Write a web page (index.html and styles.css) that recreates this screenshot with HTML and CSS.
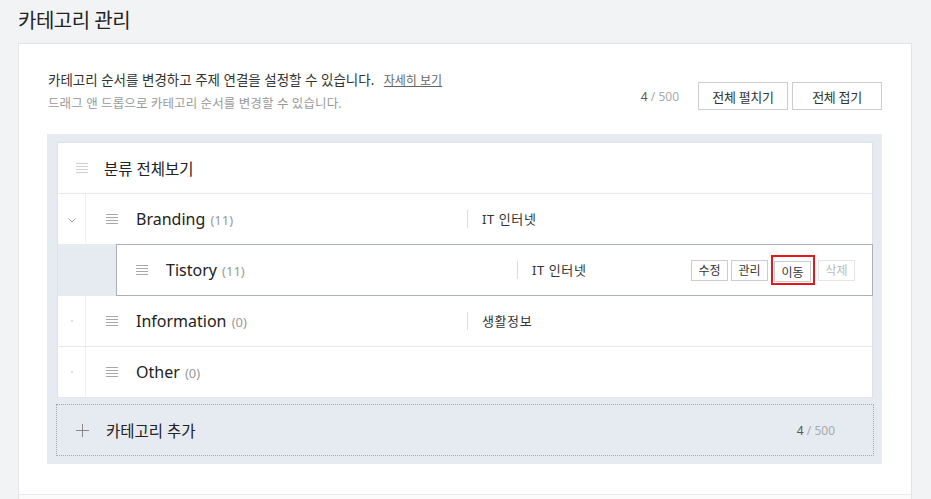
FILE: index.html
```html
<!DOCTYPE html>
<html lang="ko">
<head>
<meta charset="utf-8">
<title>카테고리 관리</title>
<link rel="stylesheet" href="styles.css">
</head>
<body>
<div class="page">
  <h1 class="title">카테고리 관리</h1>
  <div class="card">
    <div class="card-body">
      <div class="head">
        <div class="desc">
          <p class="desc-main">카테고리 순서를 변경하고 주제 연결을 설정할 수 있습니다. <a class="more">자세히 보기</a></p>
          <p class="desc-sub">드래그 앤 드롭으로 카테고리 순서를 변경할 수 있습니다.</p>
        </div>
        <div class="tools">
          <span class="count"><b>4</b> / 500</span>
          <button class="btn">전체 펼치기</button>
          <button class="btn">전체 접기</button>
        </div>
      </div>
      <div class="tree">
        <ul class="list">
          <li class="row row-all">
            <span class="drag drag-light"><i></i><i></i><i></i><i></i></span>
            <span class="name-all">분류 전체보기</span>
          </li>
          <li class="row">
            <span class="toggle">
              <svg width="8" height="5" viewBox="0 0 8 5"><path d="M0.5 0.5 L4 4 L7.5 0.5" fill="none" stroke="#9a9a9a" stroke-width="1"/></svg>
            </span>
            <span class="drag"><i></i><i></i><i></i><i></i></span>
            <span class="name name-parent">Branding <em>(11)</em></span>
            <span class="topic">IT 인터넷</span>
          </li>
          <li class="row row-child">
            <div class="child-box">
              <span class="drag"><i></i><i></i><i></i><i></i></span>
              <span class="name name-child">Tistory <em>(11)</em></span>
              <span class="topic">IT 인터넷</span>
              <div class="actions">
                <button class="mini">수정</button>
                <button class="mini">관리</button>
                <span class="highlight"><button class="mini">이동</button></span>
                <button class="mini mini-off">삭제</button>
              </div>
            </div>
          </li>
          <li class="row">
            <span class="toggle"><span class="dot"></span></span>
            <span class="drag"><i></i><i></i><i></i><i></i></span>
            <span class="name name-parent">Information <em>(0)</em></span>
            <span class="topic">생활정보</span>
          </li>
          <li class="row">
            <span class="toggle"><span class="dot"></span></span>
            <span class="drag"><i></i><i></i><i></i><i></i></span>
            <span class="name name-parent">Other <em>(0)</em></span>
          </li>
        </ul>
        <div class="add">
          <svg class="plus" width="13" height="13" viewBox="0 0 13 13"><path d="M6.5 0 V13 M0 6.5 H13" stroke="#888" stroke-width="1"/></svg>
          <span class="add-label">카테고리 추가</span>
          <span class="count add-count"><b>4</b> / 500</span>
        </div>
      </div>
    </div>
    <div class="card-foot"></div>
  </div>
</div>
</body>
</html>
```

FILE: styles.css
```css
* { box-sizing: border-box; }
html, body { margin: 0; padding: 0; }
body {
  background: #f2f3f5;
  font-family: "Noto Sans", "Noto Sans CJK KR", sans-serif;
  color: #333;
  overflow: hidden;
}
.page {
  padding: 0 19px 0 18px;
}
.title {
  margin: 0;
  height: 43px;
  line-height: 42px;
  font-size: 20px;
  font-weight: 400;
  color: #222;
  letter-spacing: -0.5px;
}
.card {
  background: #fff;
  border: 1px solid #e2e4e8;
}
.card-body {
  padding: 25px 29px 30px 28px;
}
.card-foot {
  border-top: 1px solid #e8eaee;
  background: #fbfbfc;
  height: 40px;
}
.head {
  display: flex;
  justify-content: space-between;
  align-items: flex-start;
}
.desc p {
  margin: 0;
  line-height: 23px;
}
.desc-main {
  font-size: 13.5px;
  color: #333;
  padding-left: 1px;
}
.desc-sub {
  font-size: 12.5px;
  color: #999;
  padding-left: 1px;
  letter-spacing: 0.1px;
}
.more {
  font-size: 12px;
  color: #666;
  text-decoration: underline;
  margin-left: 6px;
}
.tools {
  display: flex;
  align-items: center;
  margin-top: 13px;
}
.count {
  font-size: 12px;
  color: #aaa;
  margin-right: 15px;
}
.count b {
  font-weight: 400;
  color: #555;
}
.btn {
  height: 28px;
  width: 90px;
  margin-left: 4px;
  border: 1px solid #c9ccd2;
  background: #fff;
  font-family: inherit;
  font-size: 13px;
  color: #333;
  padding: 0;
  letter-spacing: -0.3px;
}
.tree {
  margin-top: 19px;
  background: #e6ebf1;
  padding: 8px 8px 8px 9px;
}
.list {
  list-style: none;
  margin: 0 1px;
  padding: 0;
  background: #fff;
  border: 1px solid #dde2e9;
  border-bottom: 0;
}
.row {
  display: flex;
  align-items: center;
  height: 51px;
  border-bottom: 1px solid #e3e7ee;
}
.row-all .drag {
  margin-left: 18px;
}
.name-all {
  margin-left: 16px;
  font-size: 15.5px;
  color: #222;
}
.toggle {
  width: 28px;
  align-self: stretch;
  border-right: 1px solid #eef0f4;
  display: flex;
  align-items: center;
  justify-content: center;
}
.toggle svg {
  display: block;
  margin-top: 2px;
}
.dot {
  width: 2px;
  height: 2px;
  background: #ddd;
}
.drag {
  display: flex;
  flex-direction: column;
  gap: 2px;
  width: 12px;
  margin-left: 20px;
  flex: none;
}
.drag i {
  display: block;
  height: 1px;
  background: #a8a8a8;
}
.drag-light i {
  background: #cfcfcf;
}
.name {
  margin-left: 18px;
  font-size: 16px;
  color: #222;
  white-space: nowrap;
}
.name em {
  font-style: normal;
  font-size: 13px;
  color: #999;
  margin-left: 1px;
}
.name-parent { width: 331px; }
.name-child { width: 351px; }
.topic {
  border-left: 1px solid #dcdcdc;
  height: 18px;
  line-height: 18px;
  padding-left: 14px;
  font-size: 13px;
  color: #333;
  letter-spacing: 0.6px;
}
.row-child {
  height: 52px;
  background: #e6ebf1;
  border-bottom: 0;
  margin-top: -1px;
  margin-right: -1px;
}
.child-box {
  margin-left: 58px;
  flex: 1;
  align-self: stretch;
  display: flex;
  align-items: center;
  background: #fff;
  border: 1px solid #a9b0bb;
}
.child-box .drag {
  margin-left: 19px;
}
.actions {
  margin-left: auto;
  margin-right: 17px;
  display: flex;
  align-items: center;
}
.mini {
  height: 21px;
  width: 37px;
  padding: 0;
  border: 1px solid #c9ccd2;
  background: #fff;
  font-family: inherit;
  font-size: 12px;
  color: #333;
  margin-left: 3px;
}
.mini-off {
  color: #bbb;
  border-color: #e3e5e8;
  margin-left: 3px;
}
.highlight {
  display: flex;
  border: 2px solid #e8151b;
  padding: 4px 2px 1px 1px;
  margin-left: 3px;
}
.highlight .mini {
  margin-left: 0;
}
.add {
  margin-top: 6px;
  height: 52px;
  border: 1px dotted #a3a9b3;
  display: flex;
  align-items: center;
  padding-left: 19px;
}
.plus {
  display: block;
  flex: none;
}
.add-label {
  margin-left: 17px;
  font-size: 15.5px;
  color: #222;
}
.add-count {
  margin-left: auto;
  margin-right: 38px;
}
```
